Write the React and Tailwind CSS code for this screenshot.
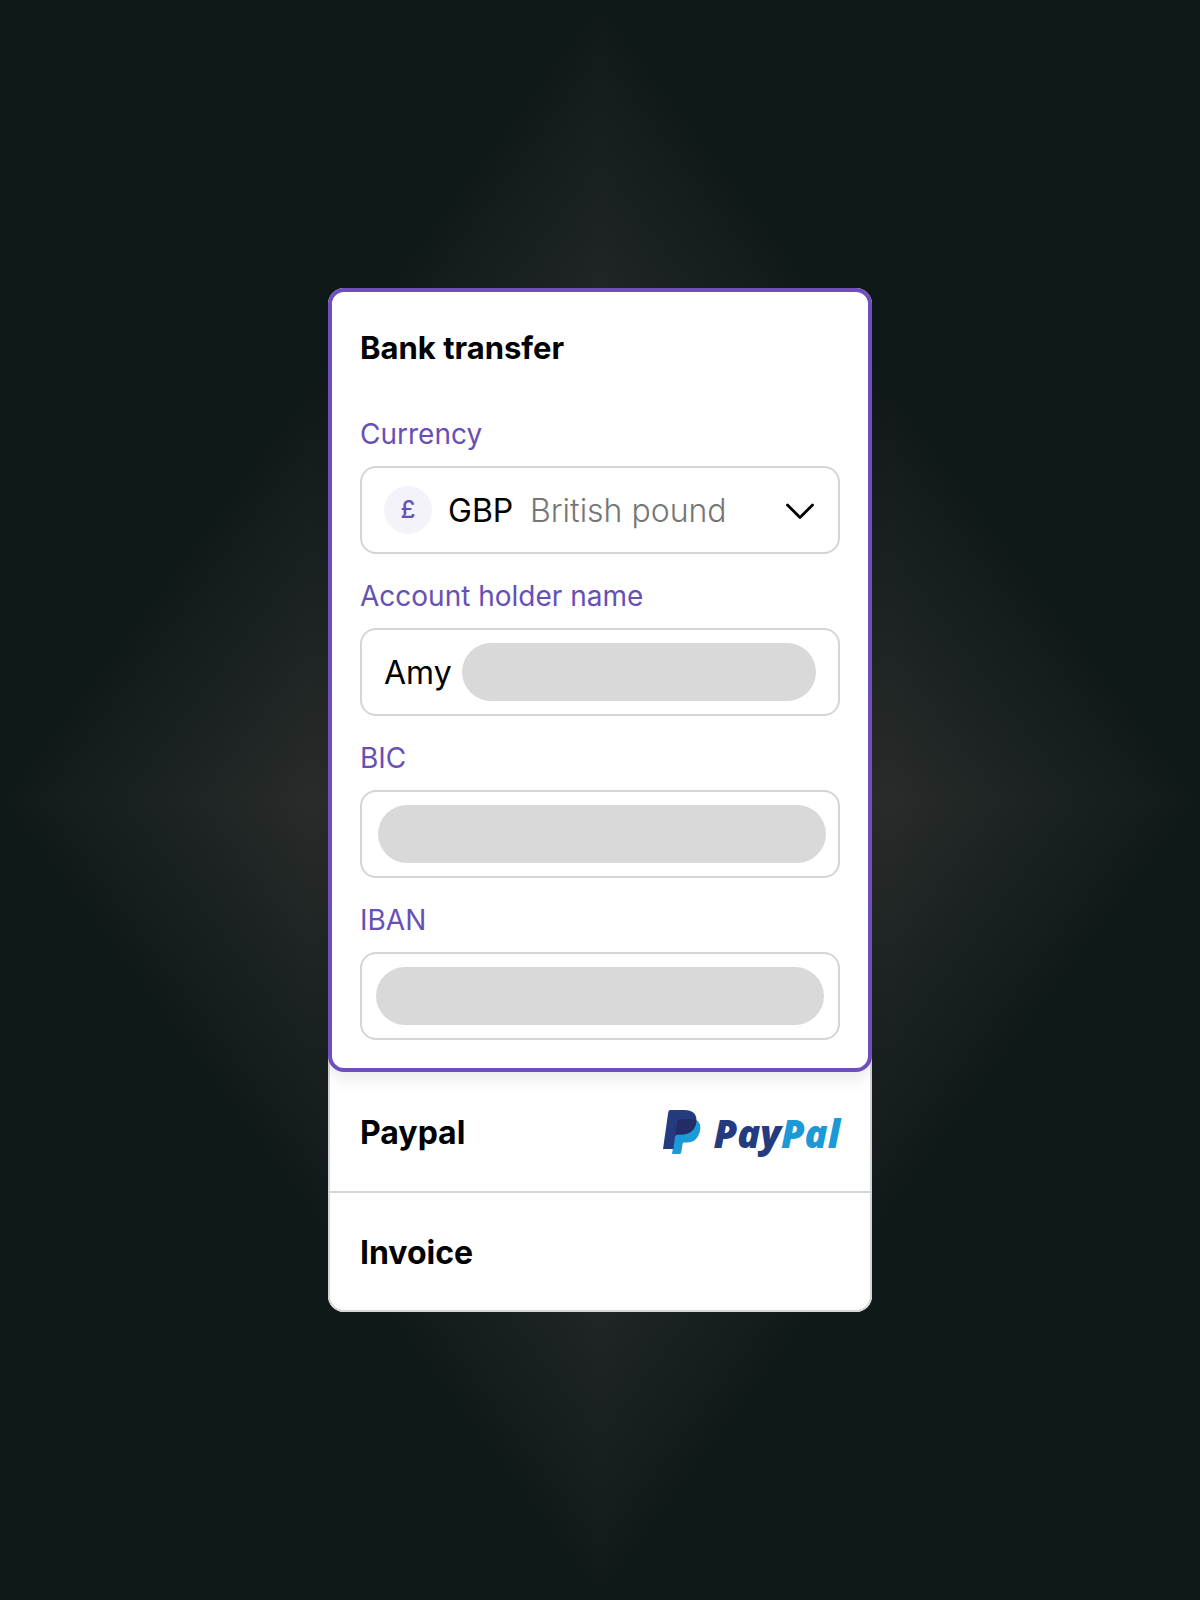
import React, { useState } from 'react';

const CURRENCIES = [
  { code: 'GBP', symbol: '£', name: 'British pound' },
  { code: 'EUR', symbol: '€', name: 'Euro' },
  { code: 'USD', symbol: '$', name: 'US dollar' },
];

const labelClass = 'text-[28px] leading-8 text-[#6750b5]';
const fieldClass = 'h-[88px] w-full rounded-2xl border-2 border-[#d5d5d7] bg-white';

function CurrencyField() {
  const [code, setCode] = useState('GBP');
  const currency = CURRENCIES.find((item) => item.code === code);

  return (
    <div className="flex flex-col gap-4">
      <label htmlFor="currency" className={labelClass}>Currency</label>
      <div className="grid">
        <select
          id="currency"
          value={code}
          onChange={(e) => setCode(e.target.value)}
          className={`${fieldClass} col-start-1 row-start-1 appearance-none pt-0.5 pl-[86px] text-[32px] text-black`}
        >
          {CURRENCIES.map((item) => (
            <option key={item.code} value={item.code}>{item.code}</option>
          ))}
        </select>
        <div className="pointer-events-none col-start-1 row-start-1 flex items-center px-6">
          <span className="flex h-12 w-12 items-center justify-center rounded-full bg-[#f5f3fa] text-2xl font-medium text-[#6750b5]">
            {currency.symbol}
          </span>
          <span className="ml-[98px] grow pt-0.5 text-[32px] font-light text-[#767676]">{currency.name}</span>
          <svg viewBox="0 0 32 32" className="h-8 w-8" fill="none" stroke="black" strokeWidth="2.8" strokeLinecap="round" strokeLinejoin="round">
            <path d="M3.500 11 16 23.500 28.500 11" />
          </svg>
        </div>
      </div>
    </div>
  );
}

function TextField({ id, label, defaultValue, children }) {
  return (
    <div className="flex flex-col gap-4">
      <label htmlFor={id} className={labelClass}>{label}</label>
      <div className="grid">
        <input
          id={id}
          type="text"
          defaultValue={defaultValue}
          className={`${fieldClass} col-start-1 row-start-1 px-[22px] text-[32px] text-black`}
        />
        {children}
      </div>
    </div>
  );
}

function PaypalLogo() {
  return (
    <span className="flex items-center gap-3">
      <svg viewBox="0 0 38 44" className="h-11 w-[38px]" aria-hidden="true">
        <path fill="#1b9ad7" d="M33 10c3.500 2 5 5 4.200 9.500C36 28 31 32.500 24 32.500h-2.600c-1 0-1.600.6-1.800 1.600L18.200 42.500c-.2.900-.8 1.500-1.700 1.500H9l3-20Z" />
        <path fill="#253b80" d="M7.500 0h14C29.500 0 34.500 4 33.300 12c-1.300 8.500-7 12.500-15 12.500h-3.500c-1.400 0-2.400.8-2.700 2.200L10.400 39H0L5.300 2C5.500.8 6.300 0 7.500 0Z" />
        <path fill="#222d65" d="M33.200 10.200c.2.600.2 1.200.1 1.800-1.300 8.500-7 12.500-15 12.500h-3.500c-1.400 0-2.400.8-2.700 2.200L14.300 12c.2-1.500 1.200-2.700 2.900-2.700h11c1.900 0 3.600.3 5 .9Z" />
      </svg>
      <span className="pt-0.5 font-['Open_Sans',sans-serif] text-[38px] leading-11 font-extrabold text-[#253b80] italic">
        Pay<span className="text-[#1b9ad7]">Pal</span>
      </span>
    </span>
  );
}

export default function App() {
  return (
    <main className="relative isolate flex min-h-screen items-center justify-center bg-[#10191a] font-[Inter,sans-serif]">
      {/* Diamond glow, one gradient per quadrant */}
      <div className="absolute inset-0 -z-10 grid grid-cols-2 grid-rows-2">
        <div className="bg-linear-to-tl from-[#3f3d3a] to-[#10191a] to-50%" />
        <div className="bg-linear-to-tr from-[#3f3d3a] to-[#10191a] to-50%" />
        <div className="bg-linear-to-bl from-[#3f3d3a] to-[#10191a] to-50%" />
        <div className="bg-linear-to-br from-[#3f3d3a] to-[#10191a] to-50%" />
      </div>

      <div className="w-full max-w-[544px] rounded-2xl bg-white">
        <section className="relative rounded-2xl border-4 border-[#6f4fbd] bg-white p-7 shadow-[0_8px_16px_rgba(0,0,0,0.08)]">
          <h2 className="pt-2 text-[31px] leading-10 font-bold text-black">Bank transfer</h2>
          <form className="mt-[50px] flex flex-col gap-[26px]">
            <CurrencyField />
            <TextField id="holder" label="Account holder name" defaultValue="Amy">
              <span className="pointer-events-none col-start-1 row-start-1 mr-6 ml-[102px] h-[58px] self-center rounded-full bg-[#d9d9d9]" />
            </TextField>
            <TextField id="bic" label="BIC">
              <span className="pointer-events-none col-start-1 row-start-1 mr-[14px] ml-[18px] h-[58px] self-center rounded-full bg-[#d9d9d9]" />
            </TextField>
            <TextField id="iban" label="IBAN">
              <span className="pointer-events-none col-start-1 row-start-1 mx-4 h-[58px] self-center rounded-full bg-[#d9d9d9]" />
            </TextField>
          </form>
        </section>

        <div className="-mt-4 rounded-b-2xl border-2 border-t-0 border-[#d5d5d7] pt-4">
          <button type="button" className="flex h-[121px] w-full items-center justify-between border-b-2 border-[#d5d5d7] px-[30px]">
            <span className="pt-0.5 text-[32px] font-bold text-black">Paypal</span>
            <PaypalLogo />
          </button>
          <button type="button" className="flex h-[117px] w-full items-center px-[30px]">
            <span className="pt-0.5 text-[32px] font-bold text-black">Invoice</span>
          </button>
        </div>
      </div>
    </main>
  );
}
